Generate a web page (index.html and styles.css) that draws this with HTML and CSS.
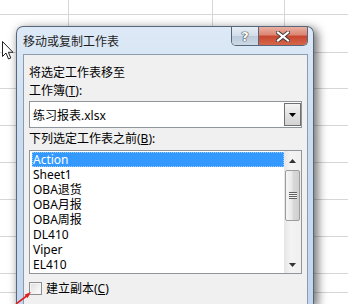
FILE: index.html
```html
<!DOCTYPE html>
<html lang="zh-CN">
<head>
    <meta charset="UTF-8">
    <meta name="viewport" content="width=device-width, initial-scale=1.0">
    <title>移动或复制工作表</title>
    <link rel="stylesheet" href="styles.css">
</head>
<body>
    <!-- 工作表背景网格 -->
    <div class="sheet">
        <div class="row h15"></div>
        <div class="row h38"></div>
        <div class="row h36"></div>
        <div class="row h37"></div>
        <div class="row h37"></div>
        <div class="row h37"></div>
        <div class="row h37"></div>
        <div class="row h37"></div>
        <div class="row h19"></div>
    </div>

    <svg class="cursor" width="13" height="21" viewBox="0 0 13 21">
        <path d="M1.5 1.5 L1.5 16.5 L5 13 L7.5 19 L9.8 18 L7.4 12.3 L12 12.3 Z" fill="#fff" stroke="#222" stroke-width="1"/>
    </svg>

    <div class="dialog">
        <div class="titlebar">
            <span class="title">移动或复制工作表</span>
            <div class="caption-buttons">
                <span class="btn-help">?</span>
                <span class="btn-close">
                    <svg width="14" height="11" viewBox="0 0 14 11">
                        <path d="M2 1.5 L12 9.5 M12 1.5 L2 9.5" stroke="#3a3a3a" stroke-width="4" stroke-linecap="square"/>
                        <path d="M2 1.5 L12 9.5 M12 1.5 L2 9.5" stroke="#fff" stroke-width="2.2" stroke-linecap="square"/>
                    </svg>
                </span>
            </div>
        </div>

        <div class="client">
            <div class="label">将选定工作表移至</div>
            <div class="label">工作簿(<u>T</u>):</div>
            <div class="combo">
                <span class="combo-text">练习报表.xlsx</span>
                <span class="drop">
                    <svg width="7" height="4" viewBox="0 0 7 4"><path d="M0 0 H7 L3.5 4 Z" fill="#000"/></svg>
                </span>
            </div>
            <div class="label label-list">下列选定工作表之前(<u>B</u>):</div>
            <div class="listbox">
                <ul class="items">
                    <li class="selected">Action</li>
                    <li>Sheet1</li>
                    <li>OBA退货</li>
                    <li>OBA月报</li>
                    <li>OBA周报</li>
                    <li>DL410</li>
                    <li>Viper</li>
                    <li>EL410</li>
                </ul>
                <div class="scrollbar">
                    <span class="sb-btn">
                        <svg width="7" height="4" viewBox="0 0 7 4"><path d="M0 4 H7 L3.5 0 Z" fill="#333"/></svg>
                    </span>
                    <span class="sb-thumb"><span class="grip"></span></span>
                    <span class="sb-btn sb-down">
                        <svg width="7" height="4" viewBox="0 0 7 4"><path d="M0 0 H7 L3.5 4 Z" fill="#333"/></svg>
                    </span>
                </div>
            </div>
            <label class="check"><span class="box"></span><span>建立副本(<u>C</u>)</span></label>
        </div>
    </div>

    <svg class="red-arrow" width="24" height="16" viewBox="0 0 24 16">
        <path d="M2 16 L14 7" stroke="#e02020" stroke-width="1.6"/>
        <path d="M17 4 L10.5 6.8 L13.6 10 Z" fill="#e02020"/>
    </svg>
</body>
</html>
```

FILE: styles.css
```css
/* 页面 */
* {
    box-sizing: border-box;
}

body {
    margin: 0;
    width: 348px;
    height: 304px;
    overflow: hidden;
    position: relative;
    background-color: #fff;
    font-family: "Noto Sans", "Noto Sans CJK SC", sans-serif;
    font-size: 12px;
    color: #000;
}

/* 网格 */
.sheet {
    height: 304px;
    display: flex;
    flex-direction: column;
    background-image: linear-gradient(to right,
        transparent 68px, #d6d6d6 68px, #d6d6d6 69px,
        transparent 69px, transparent 212px, #d6d6d6 212px, #d6d6d6 213px,
        transparent 213px, transparent 284px, #d6d6d6 284px, #d6d6d6 285px,
        transparent 285px);
}

.row {
    flex: none;
    border-bottom: 1px solid #d6d6d6;
}

.h15 { height: 15px; }
.h19 { height: 19px; }
.h36 { height: 36px; }
.h37 { height: 37px; }
.h38 { height: 38px; }

.cursor {
    position: absolute;
    left: 1px;
    top: 40px;
}

.red-arrow {
    position: absolute;
    left: 14px;
    top: 288px;
}

/* 对话框 */
.dialog {
    position: absolute;
    left: 16px;
    top: 26px;
    width: 298px;
    height: 278px;
    padding: 0 5px 0 6px;
    display: flex;
    flex-direction: column;
    border: 1px solid #56677c;
    border-bottom: none;
    border-radius: 7px 7px 0 0;
    background: linear-gradient(#dde9f6, #cbdcf0 40%, #c2d7ef);
    box-shadow: 3px 3px 10px 1px rgba(0, 0, 0, 0.55);
}

.titlebar {
    height: 27px;
    flex: none;
    display: flex;
    align-items: flex-start;
}

.title {
    margin-top: 7px;
    line-height: 14px;
    font-family: "Noto Sans CJK SC", sans-serif;
    color: #1e1e1e;
}

.caption-buttons {
    margin-left: auto;
    height: 19px;
    display: flex;
    border: 1px solid #56677c;
    border-top: none;
    border-radius: 0 0 5px 5px;
    overflow: hidden;
}

.btn-help {
    width: 27px;
    display: flex;
    align-items: center;
    justify-content: center;
    border-right: 1px solid #56677c;
    background: linear-gradient(#e6edf5, #d2dde9 50%, #bccbdb 51%, #ccd8e5);
    color: #fff;
    font-family: "DejaVu Sans", sans-serif;
    font-weight: bold;
    font-size: 13px;
    text-shadow: 0 0 1px #333, 0 0 1px #333, 0 0 1px #333;
}

.btn-close {
    width: 48px;
    display: flex;
    align-items: center;
    justify-content: center;
    background: linear-gradient(#eab0a2, #dc8572 45%, #c8452f 50%, #d5674b);
}

/* 客户区 */
.client {
    flex: 1;
    padding: 9px 5px 0 5px;
    background-color: #f0f0f0;
    border: 1px solid #8b9cb1;
    border-bottom: none;
}

.label {
    height: 18px;
    line-height: 18px;
}

.label-list {
    margin-top: 2px;
}

.combo {
    height: 27px;
    margin-top: 1px;
    display: flex;
    align-items: center;
    padding-left: 3px;
    border: 1px solid #8f959c;
    background-color: #fff;
}

.combo-text {
    flex: 1;
}

.drop {
    width: 17px;
    height: 23px;
    display: flex;
    align-items: center;
    justify-content: center;
    border: 1px solid #707070;
    background: linear-gradient(#f4f4f4, #e2e2e2 50%, #d3d3d3);
}

.listbox {
    height: 124px;
    margin-top: 2px;
    display: flex;
    border: 1px solid #8f959c;
    background-color: #fff;
}

.items {
    flex: 1;
    list-style: none;
    margin: 0;
    padding: 1px 0 0 2px;
}

.items li {
    height: 15px;
    line-height: 15px;
    padding-left: 1px;
    white-space: nowrap;
}

.items li.selected {
    background-color: #3399ff;
    color: #fff;
    outline: 1px dotted #9ccaff;
    outline-offset: -1px;
}

.scrollbar {
    width: 17px;
    display: flex;
    flex-direction: column;
    background: linear-gradient(to right, #e6e6e6, #f3f3f3 40%, #f0f0f0);
}

.sb-btn {
    height: 17px;
    display: flex;
    align-items: center;
    justify-content: center;
    padding-top: 2px;
}

.sb-down {
    margin-top: auto;
    padding-top: 0;
}

.sb-thumb {
    height: 51px;
    margin: 2px 1px 0 1px;
    display: flex;
    align-items: center;
    justify-content: center;
    border: 1px solid #9b9b9b;
    border-radius: 2px;
    background: linear-gradient(to right, #f6f6f6, #e9e9e9 45%, #d8d8d8 55%, #d0d0d0);
}

.grip {
    width: 8px;
    height: 7px;
    background: repeating-linear-gradient(#616161 0 1px, #f2f2f2 1px 2px);
}

.check {
    margin-top: 8px;
    height: 13px;
    display: flex;
    align-items: center;
    gap: 4px;
    line-height: 13px;
}

.box {
    width: 13px;
    height: 13px;
    border: 1px solid #8e8f8f;
    background: linear-gradient(135deg, #dcdcdc, #f6f6f6 70%, #fff);
    box-shadow: inset 0 0 0 1px #f4f4f4;
}
```
